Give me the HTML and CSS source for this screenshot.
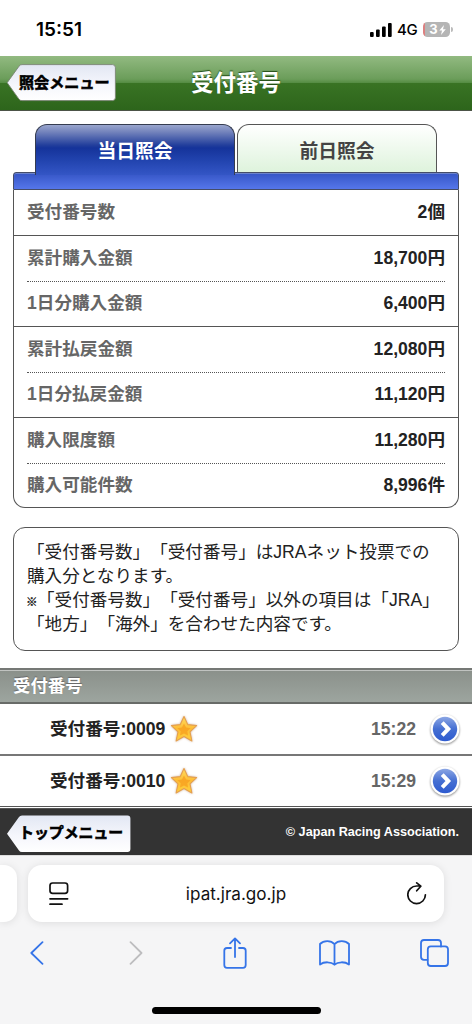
FILE: index.html
```html
<!DOCTYPE html>
<html lang="ja">
<head>
<meta charset="utf-8">
<meta name="viewport" content="width=device-width">
<title>受付番号</title>
<link rel="stylesheet" href="styles.css">
</head>
<body>
<svg class="defs" width="0" height="0" aria-hidden="true">
  <defs>
    <linearGradient id="btn" x1="0" y1="0" x2="0" y2="1"><stop offset="0" stop-color="#e2e7f3"/><stop offset=".55" stop-color="#f5f6fc"/><stop offset="1" stop-color="#fff"/></linearGradient>
    <linearGradient id="gold" x1="0" y1="0" x2="0" y2="1"><stop offset="0" stop-color="#ffdc60"/><stop offset=".5" stop-color="#fdbd35"/><stop offset="1" stop-color="#ffd03c"/></linearGradient>
    <linearGradient id="disc" x1="0" y1="0" x2="0" y2="1"><stop offset="0" stop-color="#8ba6e4"/><stop offset=".5" stop-color="#456fd2"/><stop offset="1" stop-color="#2e5bd0"/></linearGradient>
    <symbol id="star" viewBox="0 0 28 28">
      <path d="M14 1.5 17.7 9.6 26.6 10.6 20 16.8 21.9 26 14 21.6 6.1 26 8 16.8 1.4 10.6 10.3 9.6Z" fill="url(#gold)" stroke="#e5a04f" stroke-width="1.1" stroke-linejoin="round"/>
      <path d="M14 8.5 16.1 12.4 20.6 13.2 17.3 16.2 18 20.4 14 18.4 10 20.4 10.7 16.2 7.4 13.2 11.9 12.4Z" fill="#f79c1c" opacity=".7"/>
    </symbol>
    <symbol id="go" viewBox="0 0 32 32">
      <circle cx="16" cy="16" r="14.4" fill="#fff"/>
      <circle cx="16" cy="16" r="12.2" fill="url(#disc)"/>
      <path d="M13.2 9.7 19.3 16 13.2 22.3" fill="none" stroke="#fff" stroke-width="4"/>
    </symbol>
  </defs>
</svg>

<div class="status">
  <span class="clock">15:51</span>
  <div class="signals">
    <svg width="22" height="14" viewBox="0 0 22 14"><rect x="0" y="9" width="3.7" height="5" rx="1"/><rect x="6" y="6.5" width="3.7" height="7.5" rx="1"/><rect x="12" y="3.5" width="3.7" height="10.5" rx="1"/><rect x="18" y="0" width="3.7" height="14" rx="1"/></svg>
    <span class="net">4G</span>
    <div class="battery"><span>3</span><svg width="7" height="10" viewBox="0 0 7 10"><path d="M5 0 .3 5.6H3L2 10 6.8 4.2H4Z" fill="#fff"/></svg></div><i class="nub"></i>
  </div>
</div>

<header class="bar">
  <a class="back back-short"><svg width="109" height="38" viewBox="0 0 109 38"><path d="M.2 18.7 12 2.2Q13 .6 15 .6H105.5Q108.4.6 108.4 3.6V33.6Q108.4 36.6 105.5 36.6H15Q13 36.6 12 35.2Z" fill="url(#btn)" stroke="#7b8474" stroke-width=".9"/></svg><span>照会メニュー</span></a>
  <h1>受付番号</h1>
</header>

<main>
  <section class="summary">
    <nav class="tabs"><a class="tab tab-on">当日照会</a><a class="tab">前日照会</a></nav>
    <div class="strip"></div>
    <dl class="table">
      <div class="group"><div class="row"><dt>受付番号数</dt><dd>2個</dd></div></div>
      <div class="group"><div class="row"><dt>累計購入金額</dt><dd>18,700円</dd></div><div class="row"><dt>1日分購入金額</dt><dd>6,400円</dd></div></div>
      <div class="group"><div class="row"><dt>累計払戻金額</dt><dd>12,080円</dd></div><div class="row"><dt>1日分払戻金額</dt><dd>11,120円</dd></div></div>
      <div class="group"><div class="row"><dt>購入限度額</dt><dd>11,280円</dd></div><div class="row"><dt>購入可能件数</dt><dd>8,996件</dd></div></div>
    </dl>
  </section>
  <p class="note">「受付番号数」「受付番号」はJRAネット投票での<br>購入分となります。<br><span class="mark">※</span>「受付番号数」「受付番号」以外の項目は「JRA」<br>「地方」「海外」を合わせた内容です。</p>
  <h2>受付番号</h2>
  <ul class="list">
    <li><span class="name">受付番号:0009</span><svg class="star" width="28" height="28"><use href="#star"/></svg><time>15:22</time><svg class="go" width="32" height="32"><use href="#go"/></svg></li>
    <li><span class="name">受付番号:0010</span><svg class="star" width="28" height="28"><use href="#star"/></svg><time>15:29</time><svg class="go" width="32" height="32"><use href="#go"/></svg></li>
  </ul>
</main>

<footer class="foot">
  <a class="back back-long"><svg width="124" height="38" viewBox="0 0 124 38"><path d="M0 18.7 12 2Q13 .5 15 .5H120.5Q123.4.5 123.4 3.5V34Q123.4 37 120.5 37H15Q13 37 12 35.5Z" fill="url(#btn)"/></svg><span>トップメニュー</span></a>
  <small>© Japan Racing Association.</small>
</footer>

<div class="browser">
  <div class="address-row">
    <div class="prev-page"></div>
    <div class="address">
      <svg width="20" height="24" viewBox="0 0 20 24" fill="none" stroke="#111" stroke-width="1.7" stroke-linecap="round"><rect x="1" y="1" width="17.6" height="10.4" rx="2.6"/><path d="M1 16.8H18.6M1 22.2H13"/></svg>
      <span>ipat.jra.go.jp</span>
      <svg width="20" height="24" viewBox="0 0 20 24" fill="none" stroke="#111" stroke-width="1.7" stroke-linecap="round" stroke-linejoin="round"><path d="M18.4 12.8A8.8 8.8 0 1 1 9.6 4H13.5M9.7 0.9 13.8 4.2 9.7 8.8"/></svg>
    </div>
  </div>
  <div class="tools">
    <svg width="14" height="24" viewBox="0 0 14 24"><path d="M12.5 1.2 1.3 12 12.5 22.8"/></svg>
    <svg class="off" width="14" height="24" viewBox="0 0 14 24"><path d="M1.5 1.2 12.5 12 1.5 22.8"/></svg>
    <svg width="24" height="32" viewBox="0 0 24 32"><path d="M8 11H4Q1.3 11 1.3 13.7V28Q1.3 30.8 4 30.8H20Q22.7 30.8 22.7 28V13.7Q22.7 11 20 11H16M12 20V1.5M7 6.3 12 1.4 17 6.3"/></svg>
    <svg width="31" height="26" viewBox="0 0 31 26"><path d="M15.5 4.2C12 .2 4.7.2 1 4V24.5C5 21.5 12 21.5 15.5 24.7 19 21.5 26 21.5 30 24.5V4C26.3.2 19 .2 15.5 4.2ZM15.5 4.2V24.7"/></svg>
    <svg width="29" height="28" viewBox="0 0 29 28"><path d="M7.5 20.8H4Q1 20.8 1 17.8V4Q1 1 4 1H18Q21 1 21 4V7.5"/><rect x="7.8" y="7.3" width="20.2" height="19.7" rx="3"/></svg>
  </div>
  <div class="home"></div>
</div>
</body>
</html>
```
FILE: styles.css
```css
* { box-sizing: border-box; }
body, h1, h2, p, dl, dd, ul { margin: 0; padding: 0; }
body {
  width: 472px;
  height: 1024px;
  overflow: hidden;
  background: #fff;
  color: #222;
  font: 17.6px/24px "Liberation Sans", "Noto Sans CJK JP", sans-serif;
  text-spacing-trim: space-all;
}
svg { display: block; flex: none; }
.defs { position: absolute; }

/* phone status bar */
.status { height: 56px; padding: 3px 18px 0 36px; display: flex; justify-content: space-between; align-items: center; font-family: Inter, sans-serif; color: #000; }
.clock { font-size: 19px; font-weight: 600; }
.signals { display: flex; align-items: center; margin-right: 1px; }
.net { margin-left: 5px; width: 26px; font-size: 15px; font-weight: 500; letter-spacing: -.3px; }
.battery { width: 27px; height: 15px; border-radius: 4.5px; background: linear-gradient(90deg, #dc8080 2px, #b5b5b5 2px); display: flex; align-items: center; justify-content: center; gap: 1px; padding-left: 2px; color: #fff; font-size: 13px; font-weight: 700; line-height: 15px; }
.nub { width: 2px; height: 5px; margin-left: 1px; border-radius: 0 2px 2px 0; background: #bbb; }

/* page header */
.bar { height: 55px; display: grid; border-bottom: 1px solid #4c5447; background: linear-gradient(#92ba81 0, #6b9d5a 23px, #548b42 27px, #397324 27px, #2d651b 54px); }
.bar > * { grid-area: 1 / 1; }
h1 { align-self: center; text-align: center; font-size: 22.5px; line-height: 30px; color: #fff; text-shadow: 0 -1px 1px #234d16; padding-top: 2px; }
.back { display: grid; margin: 8px 0 0 7px; z-index: 1; }
.back > * { grid-area: 1 / 1; }
.back span { align-self: center; font-size: 15.1px; line-height: 20px; font-weight: 700; color: #000; -webkit-text-stroke: .6px #000; white-space: nowrap; padding-left: 12px; }
.back-short { width: 109px; height: 38px; }
.back-long { width: 124px; height: 38px; }
.back-long span { font-size: 14.9px; padding-bottom: 2px; }

/* totals */
.summary { margin: 13px 13px 0; }
.tabs { display: flex; gap: 2px; padding-left: 22px; height: 48px; }
.tab { width: 200px; height: 48px; border: 1px solid #555; border-bottom: 0; border-radius: 12px 12px 0 0; background: linear-gradient(#fff, #def3dc); text-align: center; font-size: 18.8px; font-weight: 700; line-height: 53px; color: #444; }
.tab-on { height: 51px; z-index: 1; border-color: #353c50; background: linear-gradient(#9aa6ce 0, #7383bc 7px, #233f9c 20px, #15339a 23px, #2143ae 35px, #3557c7 51px); color: #fff; }
.strip { height: 18px; border: 1px solid #454d68; border-radius: 3px 3px 0 0; background: linear-gradient(#3555c5, #5576ea); box-shadow: inset 0 1px #6c83cb; }
.table { height: 318px; border: 1px solid #555; border-top: 0; border-radius: 0 0 12px 12px; display: flex; flex-direction: column; }
.group { padding: 0 13px; border-bottom: 1px solid #555; }
.group:last-child { border: 0; }
.row { height: 45px; display: flex; justify-content: space-between; align-items: center; font-weight: 700; padding-bottom: 2px; }
.row + .row { border-top: 1px dotted #555; }
dt { color: #666; }

.note { height: 124px; margin: 19px 13px 0; padding: 12px 13px; border: 1px solid #555; border-radius: 12px; white-space: nowrap; }
.mark { display: inline-block; width: 10px; font-size: 11.5px; line-height: 1; text-indent: -1px; -webkit-text-stroke: .3px #222; }

/* receipt list */
h2 { margin-top: 17px; height: 36px; padding: 1px 13px 0; border-top: 2px solid #757875; border-bottom: 2px solid #686b68; background: linear-gradient(#8a908a, #9da59f); box-shadow: inset 0 1px #c0c3c0; color: #fff; font-size: 17.4px; line-height: 30px; text-shadow: 0 -1px 1px #666; }
.list { list-style: none; font-weight: 700; }
.list li { height: 52px; display: flex; align-items: center; padding: 0 11px 0 50px; border-bottom: 2px solid #777; }
.list li:last-child { height: 53px; border-bottom: 3px double #555; background: #fff; }
.name { width: 120px; white-space: nowrap; }
.star { filter: drop-shadow(0 0 1px #cfb4a0); }
time { margin-left: auto; width: 58px; color: #666; }
.go { filter: drop-shadow(0 1px 1px #888); }

.foot { height: 46px; background: #333; display: flex; justify-content: space-between; padding-right: 13px; }
.foot .back { margin-top: 6px; }
.foot small { align-self: center; font-size: 12.65px; line-height: 16px; font-weight: 700; color: #fff; }

/* mobile browser chrome */
.browser { height: 169px; padding-top: 9px; background: #f5f5f6; border-top: 1px solid #ddd; }
.address-row { display: flex; gap: 11px; }
.prev-page, .address { height: 57px; background: #fff; box-shadow: 0 1px 9px #0000001a; }
.prev-page { width: 17px; border-radius: 0 13px 13px 0; }
.address { width: 416px; border-radius: 14px; display: flex; align-items: center; justify-content: space-between; padding: 0 17px 0 21px; font: 17.1px/24px Inter, sans-serif; color: #111; }
.address span { margin-right: 4px; }
.tools { height: 32px; margin: 15px -12px 0 -13px; display: grid; grid-template-columns: repeat(5, 1fr); align-items: center; justify-items: center; fill: none; stroke: #3574e8; stroke-width: 1.8; stroke-linecap: round; stroke-linejoin: round; }
.tools .off { stroke: #bdbdbf; }
.home { width: 169px; height: 7px; margin: 38px auto 0; border-radius: 4px; background: #000; }
```
